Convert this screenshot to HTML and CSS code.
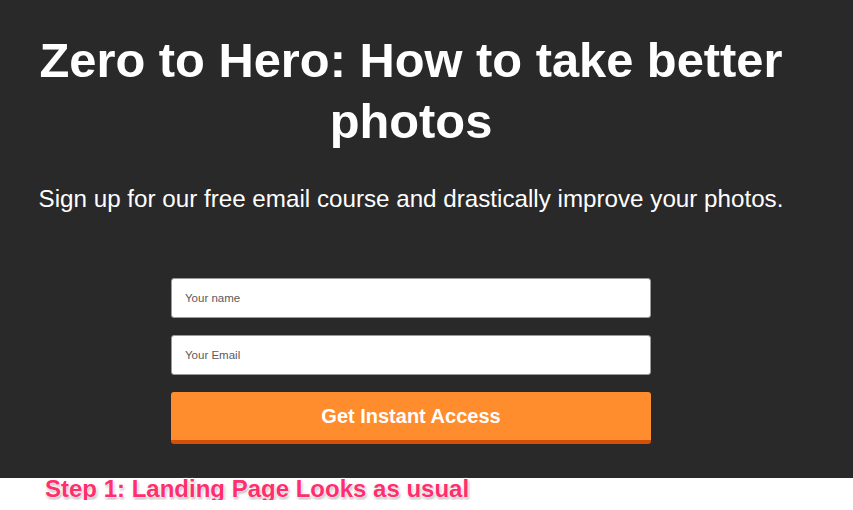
FILE: index.html
```html
<!DOCTYPE html>
<html lang="en">
<head>
    <meta charset="UTF-8">
    <meta name="viewport" content="width=device-width, initial-scale=1.0">
    <title>Zero to Hero: How to take better photos</title>
    <link rel="stylesheet" href="styles.css">
</head>
<body>
    <section class="hero">
        <div class="content">
            <h1>Zero to Hero: How to take better photos</h1>
            <p class="lead">Sign up for our free email course and drastically improve your photos.</p>
            <form class="signup" onsubmit="return false;">
                <input type="text" placeholder="Your name">
                <input type="email" placeholder="Your Email">
                <button type="submit">Get Instant Access</button>
            </form>
        </div>
    </section>
    <p class="caption">Step 1: Landing Page Looks as usual</p>
</body>
</html>
```

FILE: styles.css
```css
body {
    margin: 0;
    font-family: "Liberation Sans", Arial, Helvetica, sans-serif;
    background: #fff;
}
.hero {
    background: #292929;
    height: 478px;
    overflow: hidden;
}
.content {
    width: 822px;
    text-align: center;
}
.content h1 {
    margin: 0;
    padding-top: 30px;
    font-size: 48.8px;
    line-height: 61px;
    font-weight: bold;
    color: #fff;
}
.lead {
    margin: 33px 0 0;
    font-size: 24.2px;
    line-height: 28px;
    color: #fff;
}
.signup {
    width: 480px;
    margin: 65px auto 0;
    display: flex;
    flex-direction: column;
    gap: 17px;
}
.signup input {
    box-sizing: border-box;
    height: 40px;
    padding: 0 13px;
    border: 1px solid #9a9a9a;
    border-radius: 3px;
    background: #fff;
    font-family: inherit;
    font-size: 11.5px;
    color: #333;
}
.signup input::placeholder {
    color: #5a5a5a;
}
.signup input:focus {
    outline: none;
    border-color: #ff8c2d;
}
.signup button {
    height: 52px;
    padding: 0;
    border: none;
    border-bottom: 4px solid #d4500a;
    border-radius: 3px;
    background: #ff8c2d;
    color: #fff;
    font-family: inherit;
    font-size: 20px;
    font-weight: bold;
    cursor: pointer;
}
.signup button:hover {
    background: #ff9a45;
}
.caption {
    margin: 0;
    padding-left: 45px;
    font-size: 24px;
    line-height: 22px;
    font-weight: bold;
    color: #ff2e6e;
    text-shadow: 0 0 2px #fff, 0 0 2px #fff, 0 0 1px #fff, 1px 2px 3px rgba(0, 0, 0, 0.35);
}
```
